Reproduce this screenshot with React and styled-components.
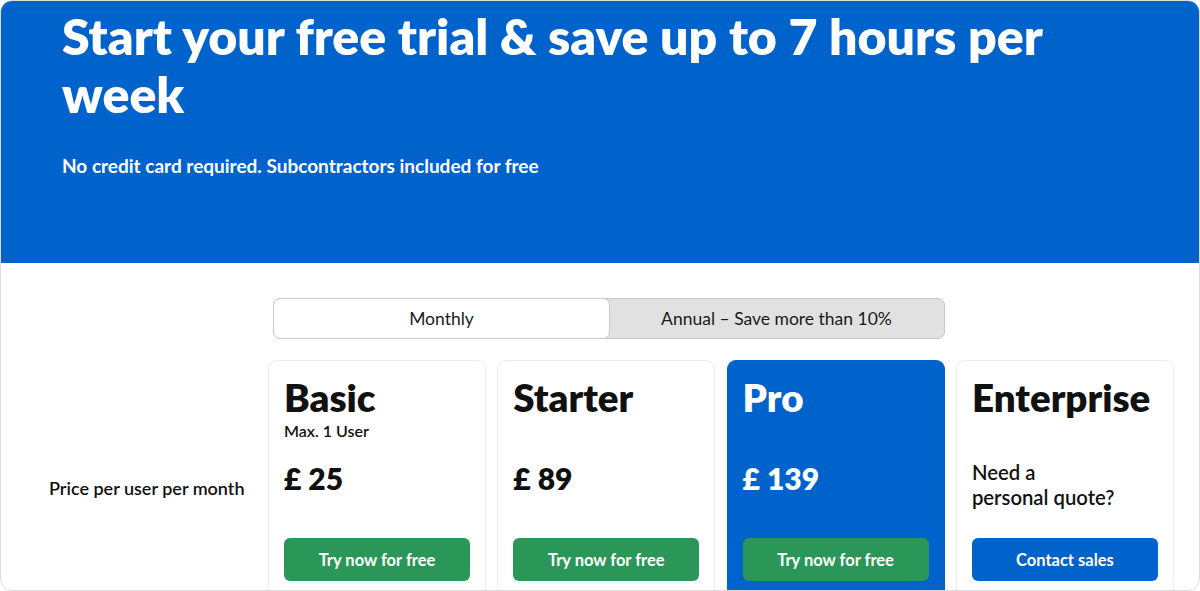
import styled, { createGlobalStyle } from "styled-components";

const GlobalStyle = createGlobalStyle`
  * {
    box-sizing: border-box;
  }
  body {
    margin: 0;
    background: #ffffff;
    font-family: Lato, "Open Sans", sans-serif;
    color: #111111;
  }
`;

export const Frame = styled.div`
  width: 1200px;
  height: 591px;
  border: 1px solid #dcdcdc;
  border-radius: 12px;
  overflow: hidden;
  background: #ffffff;
`;

export const Hero = styled.header`
  background-color: #0063cb;
  height: 262px;
  padding: 6px 61px 0;
  color: white;
`;

export const Title = styled.h1`
  margin: 0;
  font-size: 50px;
  line-height: 58px;
  font-weight: 800;
  max-width: 1000px;
`;

export const Subtitle = styled.p`
  margin: 32px 0 0;
  font-size: 19px;
  line-height: 22px;
  font-weight: 700;
`;

export const Pricing = styled.section`
  display: flex;
  flex-direction: column;
`;

export const ToggleRow = styled.div`
  display: flex;
  padding: 35px 0 0 272px;
`;

export const Toggle = styled.div`
  display: flex;
  width: 672px;
  height: 41px;
  background-color: #e1e1e1;
  border: 1px solid #c9c9c9;
  border-radius: 7px;
`;

export const ToggleOption = styled.div`
  flex: 1;
  display: flex;
  align-items: center;
  justify-content: center;
  font-size: 17.5px;
  color: #1a1a1a;
  margin: -1px;
  border-radius: 7px;
  background-color: ${(p) => (p.$active ? "#ffffff" : "transparent")};
  border: 1px solid ${(p) => (p.$active ? "#c9c9c9" : "transparent")};
`;

export const PlansRow = styled.div`
  display: flex;
  padding-top: 21px;
`;

export const RowLabel = styled.div`
  width: 267px;
  flex: none;
  padding: 118px 0 0 48px;
  font-size: 18px;
  line-height: 20px;
  font-weight: 600;
`;

export const Cards = styled.div`
  display: flex;
  gap: 11.3px;
`;

export const Card = styled.div`
  width: 218px;
  height: 260px;
  padding: 14px 15px 0;
  border-radius: 9px;
  border: 1px solid ${(p) => (p.$featured ? "#0063cb" : "#ececec")};
  background-color: ${(p) => (p.$featured ? "#0063cb" : "#ffffff")};
  color: ${(p) => (p.$featured ? "#ffffff" : "#111111")};
  display: flex;
  flex-direction: column;
`;

export const PlanName = styled.div`
  font-size: 38.5px;
  line-height: 44px;
  font-weight: 800;
`;

export const PlanNote = styled.div`
  height: 20px;
  margin-top: 3px;
  font-size: 16px;
  line-height: 18px;
  font-weight: 600;
`;

export const PriceArea = styled.div`
  height: 78px;
  margin-top: 18px;
`;

export const Price = styled.div`
  font-size: 30px;
  line-height: 36px;
  font-weight: 800;
`;

export const Quote = styled.div`
  font-size: 20.3px;
  line-height: 25px;
  font-weight: 600;
`;

export const Button = styled.button`
  height: 43px;
  width: 100%;
  border: none;
  border-radius: 6px;
  background-color: ${(p) => (p.$variant === "blue" ? "#0063cb" : "#2a9758")};
  color: #ffffff;
  font-family: inherit;
  font-size: 16.5px;
  font-weight: 700;
  cursor: pointer;
`;

const plans = [
  { name: "Basic", note: "Max. 1 User", price: "£ 25" },
  { name: "Starter", price: "£ 89" },
  { name: "Pro", price: "£ 139", featured: true },
];

const App = () => {
  return (
    <>
      <GlobalStyle />
      <Frame>
        <Hero>
          <Title>Start your free trial &amp; save up to 7 hours per week</Title>
          <Subtitle>No credit card required. Subcontractors included for free</Subtitle>
        </Hero>
        <Pricing>
          <ToggleRow>
            <Toggle>
              <ToggleOption $active>Monthly</ToggleOption>
              <ToggleOption>Annual – Save more than 10%</ToggleOption>
            </Toggle>
          </ToggleRow>
          <PlansRow>
            <RowLabel>Price per user per month</RowLabel>
            <Cards>
              {plans.map((plan) => (
                <Card key={plan.name} $featured={plan.featured}>
                  <PlanName>{plan.name}</PlanName>
                  <PlanNote>{plan.note}</PlanNote>
                  <PriceArea>
                    <Price>{plan.price}</Price>
                  </PriceArea>
                  <Button>Try now for free</Button>
                </Card>
              ))}
              <Card>
                <PlanName>Enterprise</PlanName>
                <PlanNote />
                <PriceArea>
                  <Quote>
                    Need a
                    <br />
                    personal quote?
                  </Quote>
                </PriceArea>
                <Button $variant="blue">Contact sales</Button>
              </Card>
            </Cards>
          </PlansRow>
        </Pricing>
      </Frame>
    </>
  );
};

export default App;
